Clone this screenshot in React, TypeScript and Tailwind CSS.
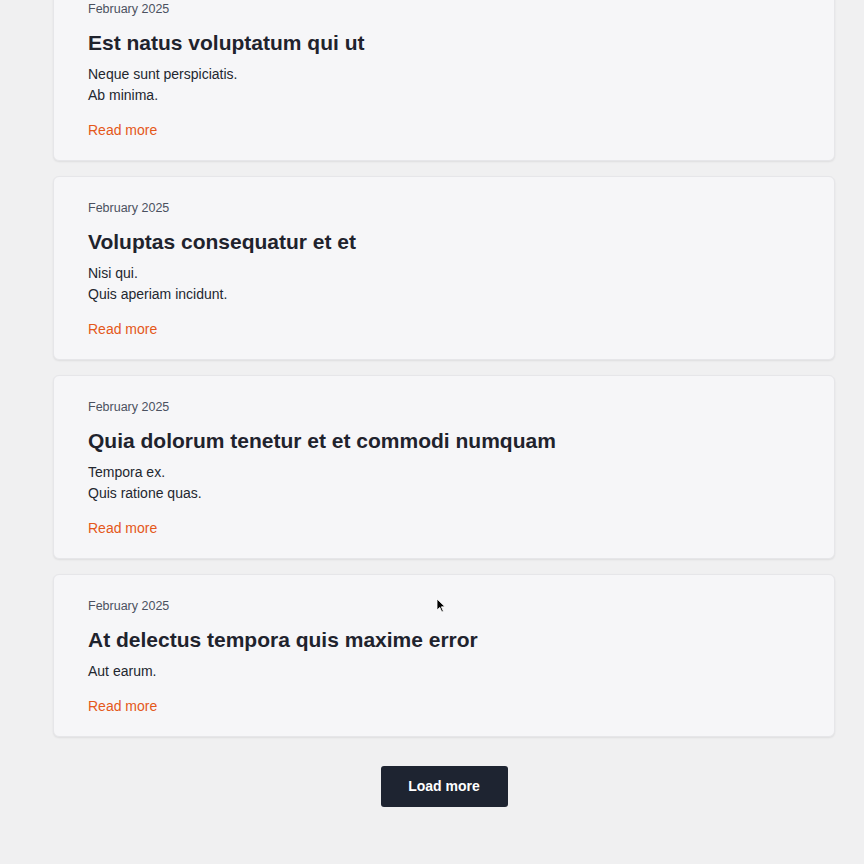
import React from "react";

const posts = [
  { title: "Est natus voluptatum qui ut", lines: ["Neque sunt perspiciatis.", "Ab minima."] },
  { title: "Voluptas consequatur et et", lines: ["Nisi qui.", "Quis aperiam incidunt."] },
  { title: "Quia dolorum tenetur et et commodi numquam", lines: ["Tempora ex.", "Quis ratione quas."] },
  { title: "At delectus tempora quis maxime error", lines: ["Aut earum."] },
];

export default function App() {
  return (
    <div
      className="relative min-h-[864px] h-[864px] overflow-hidden bg-[#f0f0f1]"
      style={{ fontFamily: '"Liberation Sans", Arial, sans-serif' }}
    >
      <div className="ml-[53px] w-[782px] mt-[-23px] flex flex-col gap-[15px]">
        {posts.map((p, i) => (
          <div
            key={i}
            className="bg-[#f6f6f8] rounded-[6px] border border-[#e6e6e9] shadow-[0_1px_2px_rgba(0,0,0,0.08)] pl-[34px] pr-6 pt-[22px] pb-[20px]"
          >
            <div className="text-[12.5px] leading-[18px] text-[#4b5160]">February 2025</div>
            <h2 className="mt-[11px] text-[21px] leading-[28px] font-bold text-[#1f232d]">{p.title}</h2>
            <div className="mt-[7px] text-[14px] leading-[21px] text-[#23272f]">
              {p.lines.map((l, j) => (
                <div key={j}>{l}</div>
              ))}
            </div>
            <div className="mt-[14px] text-[14px] leading-[20px] text-[#e4581a]">Read more</div>
          </div>
        ))}
      </div>
      <div className="ml-[53px] w-[782px] flex justify-center mt-[29px]">
        <button className="w-[127px] h-[41px] rounded-[3px] bg-[#1e2431] text-white text-[14px] font-bold">
          Load more
        </button>
      </div>
      <svg className="absolute left-[436px] top-[598px]" width="10" height="15" viewBox="0 0 10 15">
        <path d="M1 1 L1 12 L3.8 9.4 L5.8 14 L7.4 13.3 L5.4 8.8 L9 8.8 Z" fill="#000" stroke="#fff" strokeWidth="0.8" />
      </svg>
    </div>
  );
}
